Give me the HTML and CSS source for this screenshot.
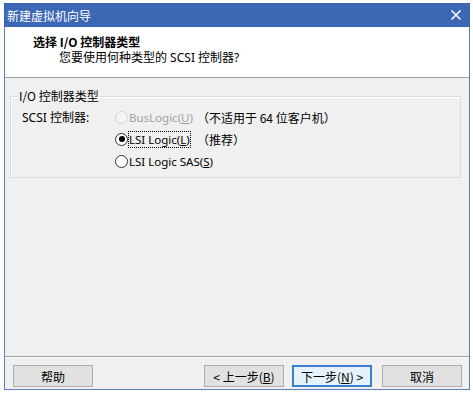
FILE: index.html
```html
<!DOCTYPE html>
<html>
<head>
<meta charset="utf-8">
<link rel="stylesheet" href="styles.css">
</head>
<body>
<div class="window">
  <div class="titlebar">
    <span class="title">新建虚拟机向导</span>
    <svg class="close" width="12" height="12" viewBox="0 0 12 12"><path d="M1.5 1.5 L10.5 10.5 M10.5 1.5 L1.5 10.5" stroke="#fff" stroke-width="1.6"/></svg>
  </div>
  <div class="header">
    <div class="h-title">选择 I/O 控制器类型</div>
    <div class="h-sub">您要使用何种类型的 SCSI 控制器?</div>
  </div>
  <div class="body">
    <fieldset class="group">
      <legend>I/O 控制器类型</legend>
      <div class="grid">
        <div class="lbl">SCSI 控制器:</div>
        <div class="opt disabled"><span class="radio"></span><span class="otext">BusLogic(<u>U</u>)</span></div>
        <div class="note">（不适用于 64 位客户机）</div>
        <div class="opt"><span class="radio checked"></span><span class="otext focus">LSI Logic(<u>L</u>)</span></div>
        <div class="note">（推荐）</div>
        <div class="opt"><span class="radio"></span><span class="otext">LSI Logic SAS(<u>S</u>)</span></div>
      </div>
    </fieldset>
  </div>
  <div class="footer">
    <button class="btn">帮助</button>
    <div class="spacer"></div>
    <button class="btn">&lt; 上一步(<u>B</u>)</button>
    <button class="btn default">下一步(<u>N</u>) &gt;</button>
    <button class="btn cancel">取消</button>
  </div>
</div>
</body>
</html>
```
FILE: styles.css
```css
html, body { margin: 0; padding: 0; background: #ffffff; }
body {
  width: 473px; height: 403px; overflow: hidden;
  font-family: "Noto Sans", "Noto Sans CJK SC", sans-serif;
  font-size: 12px; color: #000;
}
.window {
  margin: 3px 0 0 4px;
  height: 387px;
  width: 466px;
  border: 1px solid #5d7fbf;
  border-top: none;
  background: #f0f0f0;
  display: flex; flex-direction: column;
  box-sizing: border-box;
}
.titlebar {
  height: 24px;
  flex: none;
  background: #3b67b4;
  display: flex; align-items: center; justify-content: space-between;
  padding: 0 8px 0 3px;
  margin: 0 -1px;
}
.title { color: #fff; font-size: 12px; font-family: "Noto Sans CJK SC", sans-serif; }
.close { display: block; }
.header {
  flex: none;
  background: #fff;
  border-bottom: 1px solid #a0a0a0;
  padding: 7px 0 0 28px;
  box-sizing: border-box;
  height: 51px;
}
.h-title { font-weight: bold; font-family: "Noto Sans CJK SC", sans-serif; font-size: 12px; line-height: 16px; }
.h-sub { padding-left: 26px; line-height: 16px; font-family: "Noto Sans", "Noto Sans CJK SC", sans-serif; }
.body { flex: 1; padding: 11px 8px 0 5px; }
.group {
  margin: 0; padding: 5px 0 6px 11px;
  border: 1px solid #dcdcdc;
  box-shadow: inset 1px 1px 0 #fff;
  height: 89px; box-sizing: border-box;
}
.group legend { padding: 0 1px; margin-left: -4px; font-family: "Noto Sans CJK SC", sans-serif; line-height: 14px; }
.grid {
  display: grid;
  grid-template-columns: 93px 82px auto;
  row-gap: 4px;
  align-items: center;
}
.lbl { grid-row: 1; }
.opt { grid-column: 2; display: flex; align-items: center; height: 18px; }
.note { grid-column: 3; font-family: "Noto Sans CJK SC", sans-serif; white-space: nowrap; }
.grid > .opt:nth-child(2) { grid-row: 1; }
.radio {
  width: 11px; height: 11px; border: 1px solid #333; border-radius: 50%;
  background: #fff; margin-right: 0; position: relative; flex: none;
}
.radio.checked::after {
  content: ""; position: absolute; left: 2.5px; top: 2.5px; width: 6px; height: 6px;
  border-radius: 50%; background: #000;
}
.disabled { color: #a0a0a0; }
.disabled .radio { border-color: #d2d2d2; background: #f4f4f4; }
.otext { white-space: nowrap; padding: 0; border: 1px dotted transparent; font-size: 11.5px; }
.otext.focus { border-color: #000; }
.footer {
  flex: none;
  height: 33px;
  border-top: 1px solid #a0a0a0;
  box-shadow: inset 0 1px 0 #fff;
  display: flex; align-items: flex-start;
  padding: 8px 7px 0 8px;
  box-sizing: border-box;
  gap: 8px;
}
.spacer { flex: 1; }
.btn {
  width: 80px; height: 22px; margin: 0;
  background: #e1e1e1; border: 1px solid #adadad;
  font-family: "Noto Sans CJK SC", sans-serif; font-size: 12px; color: #000;
  padding: 0;
}
.btn.default { border: 2px solid #3c7fd1; background: #e5f1fb; }
.btn.cancel { margin-left: 2px; }
```
